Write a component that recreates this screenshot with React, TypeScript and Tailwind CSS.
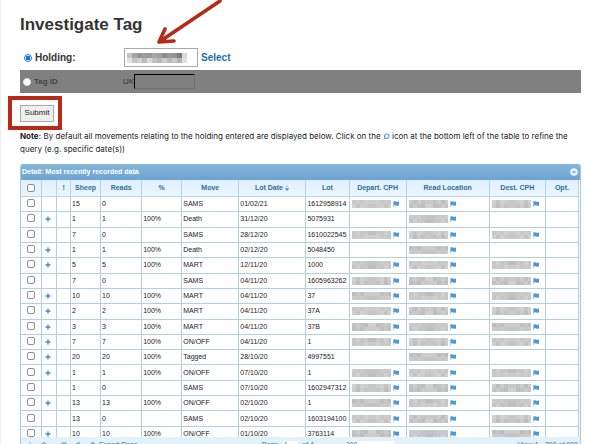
import { LuSearch } from "react-icons/lu";

const font = "font-['Liberation_Sans',Arial,sans-serif]";

type Row = {
  sheep: number;
  reads: number;
  move: string;
  date: string;
  lot: string;
  cph: boolean;
};

const rows: Row[] = [
  { sheep: 15, reads: 0, move: "SAMS", date: "01/02/21", lot: "1612958914", cph: true },
  { sheep: 1, reads: 1, move: "Death", date: "31/12/20", lot: "5075931", cph: false },
  { sheep: 7, reads: 0, move: "SAMS", date: "28/12/20", lot: "1610022545", cph: true },
  { sheep: 1, reads: 1, move: "Death", date: "02/12/20", lot: "5048450", cph: false },
  { sheep: 5, reads: 5, move: "MART", date: "12/11/20", lot: "1000", cph: true },
  { sheep: 7, reads: 0, move: "SAMS", date: "04/11/20", lot: "1605963262", cph: true },
  { sheep: 10, reads: 10, move: "MART", date: "04/11/20", lot: "37", cph: true },
  { sheep: 2, reads: 2, move: "MART", date: "04/11/20", lot: "37A", cph: true },
  { sheep: 3, reads: 3, move: "MART", date: "04/11/20", lot: "37B", cph: true },
  { sheep: 7, reads: 7, move: "ON/OFF", date: "04/11/20", lot: "1", cph: true },
  { sheep: 20, reads: 20, move: "Tagged", date: "28/10/20", lot: "4997551", cph: false },
  { sheep: 1, reads: 1, move: "ON/OFF", date: "07/10/20", lot: "1", cph: true },
  { sheep: 1, reads: 0, move: "SAMS", date: "07/10/20", lot: "1602947312", cph: true },
  { sheep: 13, reads: 13, move: "ON/OFF", date: "02/10/20", lot: "1", cph: true },
  { sheep: 13, reads: 0, move: "SAMS", date: "02/10/20", lot: "1603194100", cph: true },
  { sheep: 10, reads: 10, move: "ON/OFF", date: "01/10/20", lot: "3763114", cph: true },
];

const shades = ["#c8c8c8", "#cbcbcb", "#c3c3c3", "#d0d0d0", "#c6c6c6", "#bebebe", "#cccccc"];

// greys of the holding number, left to right
const holdingTop = ["#c4c4c4", "#a8a8a8", "#969696", "#9c9c9c", "#999999", "#a6a6a6", "#a0a0a0", "#8e8e8e", "#989898", "#949494", "#7c7c7c", "#d8d8d8"];
const holdingBottom = ["#e2e2e2", "#c6c6c6", "#d0d0d0", "#bcbcbc", "#dadada", "#c2c2c2", "#b8b8b8", "#cccccc", "#bababa", "#c8c8c8", "#b4b4b4", "#e0e0e0"];

// blocky cover for a private number
function Redacted({ seed }: { seed: number }) {
  const cells = [];
  for (let y = 0; y < 2; y++) {
    for (let x = 0; x < 10; x++) {
      const n = (x * 5 + y * 3 + seed * 2 + x * x) % shades.length;
      cells.push(<rect key={`${x}-${y}`} x={x * 4} y={y * 4} width={4} height={4} fill={shades[n]} />);
    }
  }
  return (
    <svg viewBox="0 0 39 8" className="w-[39px] h-2 shrink-0" shapeRendering="crispEdges" aria-hidden="true">
      {cells}
    </svg>
  );
}

function Location({ seed }: { seed: number }) {
  return (
    <div className="flex items-center gap-0.5 pl-px">
      <Redacted seed={seed} />
      <svg viewBox="0 0 6 6" className="size-1.5 shrink-0" aria-hidden="true">
        <path d="M0.4 0.3V6" stroke="#7fb4de" strokeWidth="0.8" />
        <path d="M0.8 0.4C2.2 -0.2 3.2 1.4 6 0.4V4.4C3.4 5.2 2.4 3.6 0.8 4.4Z" fill="#4a9ad8" />
      </svg>
    </div>
  );
}

const checkbox =
  "block size-2 ml-1.5 appearance-none rounded-[2px] border border-[#8f8f8f] bg-white";

const th = "border-r border-b border-[#b5d3e6] p-0 font-bold text-[#2e6e9e] text-center";
const td = "border-r border-b border-[#b3d0df] py-0 pl-px pr-0 whitespace-nowrap";
const checkTd = "border-r border-b border-[#b3d0df] pt-0 pb-0.5 px-0";

function DetailTable() {
  return (
    <table className="w-full h-[262px] table-fixed border-separate border-spacing-0 text-[7px] leading-[8px]">
      <colgroup>
        <col className="w-[21px]" />
        <col className="w-[15px]" />
        <col className="w-[14px]" />
        <col className="w-[30px]" />
        <col className="w-[41px]" />
        <col className="w-[40px]" />
        <col className="w-[57px]" />
        <col className="w-[67px]" />
        <col className="w-[43px]" />
        <col className="w-[57px]" />
        <col className="w-[83px]" />
        <col className="w-[56px]" />
        <col className="w-[33px]" />
      </colgroup>
      <thead>
        <tr className="h-[17px] bg-linear-to-b from-[#e2f0fb] to-[#eaf6ff]">
          <th className={th}>
            <input type="checkbox" aria-label="Select all" className={checkbox} />
          </th>
          <th className={th}></th>
          <th className={th}>!</th>
          <th className={th}>Sheep</th>
          <th className={th}>Reads</th>
          <th className={th}>%</th>
          <th className={th}>Move</th>
          <th className={th}>
            <span className="inline-flex items-center gap-px">
              Lot Date
              <svg viewBox="0 0 6 8" className="w-1.5 h-2" aria-hidden="true">
                <path d="M1 3.2L3 1L5 3.2Z" fill="#b5d0e8" />
                <path d="M0.6 4.2H5.4L3 7Z" fill="#4f94cd" />
              </svg>
            </span>
          </th>
          <th className={th}>Lot</th>
          <th className={th}>Depart. CPH</th>
          <th className={th}>Read Location</th>
          <th className={th}>Dest. CPH</th>
          <th className={th}>Opt.</th>
        </tr>
      </thead>
      <tbody className="text-[#222]">
        {rows.map((row, i) => (
          <tr key={i}>
            <td className={checkTd}>
              <input type="checkbox" aria-label={`Select lot ${row.lot}`} className={checkbox} />
            </td>
            <td className={td}>
              {row.reads > 0 && (
                <svg viewBox="0 0 6 6" className="size-1.5 ml-0.5" aria-hidden="true">
                  <path d="M3 0.5V5.5M0.5 3H5.5" stroke="#4a8cc4" strokeWidth="1.4" />
                </svg>
              )}
            </td>
            <td className={td}></td>
            <td className={td}>{row.sheep}</td>
            <td className={td}>{row.reads}</td>
            <td className={td}>{row.reads > 0 && "100%"}</td>
            <td className={td}>{row.move}</td>
            <td className={td}>{row.date}</td>
            <td className={td}>{row.lot}</td>
            <td className={td}>{row.cph && <Location seed={i} />}</td>
            <td className={td}>
              <Location seed={i + 3} />
            </td>
            <td className={td}>{row.cph && <Location seed={i + 5} />}</td>
            <td className={td}></td>
          </tr>
        ))}
      </tbody>
    </table>
  );
}

function Pager() {
  return (
    <div className="flex items-start justify-between h-5 pl-1.5 pr-0.5 pt-1 bg-[#e3f1fb] text-[7px] leading-[8px] text-[#2e6e9e]">
      <div className="flex items-center gap-2">
        <button type="button" aria-label="Add" className="w-1.5">+</button>
        <button type="button" aria-label="Search" className="mr-1.5"><LuSearch className="size-1.5" strokeWidth={3} /></button>
        <button type="button" aria-label="Edit columns">
          <svg viewBox="0 0 6 6" className="size-1.5" aria-hidden="true">
            <path d="M1 1H5V5H1Z" fill="none" stroke="#4a8cc4" />
          </svg>
        </button>
        <button type="button" aria-label="Refresh">
          <svg viewBox="0 0 6 6" className="size-1.5" aria-hidden="true">
            <path d="M5 3A2 2 0 1 1 3 1H5" fill="none" stroke="#4a8cc4" />
          </svg>
        </button>
        <button type="button" className="flex items-center gap-1">
          <svg viewBox="0 0 6 6" className="size-1.5" aria-hidden="true">
            <path d="M1 5L5 1M2 1H5V4" fill="none" stroke="#4a8cc4" />
          </svg>
          Export Page
        </button>
      </div>
      <div className="flex items-center gap-1">
        <label htmlFor="page">Page</label>
        <input id="page" defaultValue="1" className="w-4 h-2 px-0.5 bg-white" />
        <span>of 4</span>
        <select aria-label="Rows per page" className="ml-7 w-12 h-2 appearance-none bg-white">
          <option>300</option>
        </select>
      </div>
      <span>View 1 - 300 of 900</span>
    </div>
  );
}

function App() {
  return (
    <div className={`h-screen overflow-hidden bg-white border-l border-[#f0f0f0] text-[#222] ${font}`}>
      <main className="relative pl-[19px] pr-[11px] pt-3.5">
        <h1 className="text-[17px] leading-[22px] font-bold text-[#333]">Investigate Tag</h1>
        <form>
          <div className="flex items-center h-[23px] mt-2.5 pl-1 mb-px">
            <div className="flex items-center w-[100px] gap-[3px]">
              <input
                id="holding"
                type="radio"
                name="by"
                defaultChecked
                className="size-2 appearance-none rounded-full border border-[#1a73e8] bg-[radial-gradient(#1a73e8_50%,white_55%)]"
              />
              <label htmlFor="holding" className="text-[10px] leading-3 font-bold text-[#333]">Holding:</label>
            </div>
            <div className="relative">
              <input aria-label="Holding number" className="block w-[74px] h-[19px] border border-[#aaa] bg-white" />
              <svg
                viewBox="0 0 60 10"
                className="absolute left-[3px] top-[5px] w-[60px] h-2.5"
                shapeRendering="crispEdges"
                aria-hidden="true"
              >
                {holdingTop.map((fill, i) => (
                  <rect key={i} x={i * 5} width={5} height={5} fill={fill} />
                ))}
                {holdingBottom.map((fill, i) => (
                  <rect key={i} x={i * 5} y={5} width={5} height={5} fill={fill} />
                ))}
              </svg>
            </div>
            <a href="#" className="ml-[3px] text-[10px] leading-3 font-bold text-[#1a6ea8]">Select</a>
          </div>
          <div className="flex items-center h-[23px] pl-[3px] bg-[#808080] text-[8px] leading-[10px]">
            <div className="flex items-center w-[100px] gap-[3px]">
              <input id="tag" type="radio" name="by" className="size-2 appearance-none rounded-full border border-[#e4e4e4] bg-white" />
              <label htmlFor="tag" className="font-bold text-[#444]">Tag ID</label>
            </div>
            <label htmlFor="uk" className="text-[#333]">UK</label>
            <input id="uk" className="w-[61px] h-[15px] border border-t-black border-l-black border-r-[#707070] border-b-[#707070]" />
          </div>
          <div className="-ml-3 mt-[3px] w-[54px] h-[34px] flex items-center border-4 border-[#b62a17] pl-2">
            <button type="submit" className="w-[34px] h-[17px] shrink-0 border border-[#aaa] bg-[#efefef] text-[8px] leading-[10px] text-[#222]">
              Submit
            </button>
          </div>
        </form>
        <p className="text-[8px] leading-[13px] font-[Inter,sans-serif]">
          <b>Note:</b> By default all movements relating to the holding entered are displayed below. Click on the{" "}
          <LuSearch className="inline size-[7px] -scale-x-100 text-[#2e83c9]" strokeWidth={3} /> icon at the bottom left of the table to refine the
          query (e.g. specific date(s))
        </p>

        <section className="mt-2 rounded-t-[3px] border-x border-[#a6c9e2] overflow-hidden">
          <header className="flex items-center justify-between h-4 pl-px pr-0.5 bg-linear-to-b from-[#86b4d8] to-[#6ba5d1] text-[7px] leading-[8px] font-bold text-white">
            <h2>Detail: Most recently recorded data</h2>
            <button type="button" aria-label="Collapse">
              <svg viewBox="0 0 8 8" className="size-2" aria-hidden="true">
                <circle cx="4" cy="4" r="3.8" fill="#e8f3fc" />
                <path d="M2.4 4H5.6" stroke="#6ba5d1" strokeWidth="1.4" />
              </svg>
            </button>
          </header>
          <div className="h-[257px] pr-px overflow-hidden">
            <DetailTable />
          </div>
          <Pager />
        </section>

        <svg viewBox="0 0 70 46" className="absolute left-[154px] top-0 w-[70px] h-[46px]" aria-hidden="true">
          <path
            d="M65 1L4 42M10 29L4 42L19 41"
            fill="none"
            stroke="#b62a17"
            strokeWidth="3.6"
            strokeLinecap="round"
            strokeLinejoin="round"
          />
        </svg>
      </main>
    </div>
  );
}

export default App;
